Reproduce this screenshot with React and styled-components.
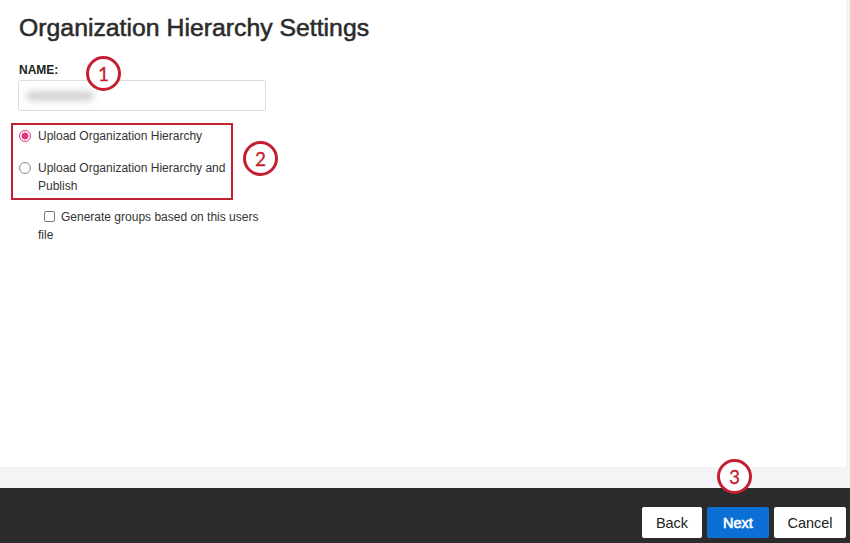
import React from "react";
import styled, { createGlobalStyle } from "styled-components";

const Global = createGlobalStyle`
  html, body { margin: 0; padding: 0; }
  body { font-family: "Liberation Sans", Arial, sans-serif; color: #333; }
  * { box-sizing: border-box; }
`;

const Page = styled.div`
  position: relative;
  width: 850px;
  height: 543px;
  display: flex;
  flex-direction: column;
  background: #f4f4f6;
  overflow: hidden;
`;

const Panel = styled.main`
  height: 467px;
  margin-right: 4px;
  background: #fff;
  padding: 13px 0 0 19px;
  display: flex;
  flex-direction: column;
`;

const Title = styled.h1`
  margin: 0;
  font-size: 24.8px;
  line-height: 29px;
  font-weight: 400;
  color: #2b2b2b;
  -webkit-text-stroke: 0.55px #2b2b2b;
`;

const Label = styled.label`
  margin-top: 21px;
  font-size: 12px;
  line-height: 14px;
  font-weight: 700;
  color: #222;
`;

const Field = styled.div`
  margin-top: 3px;
  margin-left: -1px;
  width: 248px;
  height: 31px;
  border: 1px solid #dcdcdc;
  border-radius: 2px;
  display: flex;
  align-items: center;
  padding-left: 7px;
`;

const Blurred = styled.span`
  display: inline-block;
  width: 68px;
  height: 10px;
  background: #d2d2d2;
  border-radius: 5px;
  filter: blur(3.5px);
`;

const OptionBox = styled.div`
  margin-top: 12px;
  margin-left: -8px;
  width: 222px;
  border: 2px solid #c21f30;
  padding: 2px 0 3px 6px;
  display: flex;
  flex-direction: column;
  gap: 14px;
`;

const Option = styled.label`
  display: flex;
  align-items: flex-start;
  gap: 7px;
  font-size: 12px;
  line-height: 18px;
  color: #333;
`;

const Radio = styled.span`
  flex: none;
  width: 12px;
  height: 12px;
  margin-top: 3px;
  border-radius: 50%;
  border: 1px solid ${(p) => (p.$checked ? "#e6337d" : "#8a8a8a")};
  background: ${(p) =>
    p.$checked ? "radial-gradient(circle, #e6337d 0 3.3px, #fff 3.8px)" : "#fff"};
`;

const OptionText = styled.span`
  width: 192px;
`;

const CheckRow = styled.div`
  margin-top: 8px;
  margin-left: 19px;
  width: 228px;
  font-size: 12px;
  line-height: 18px;
  color: #333;
`;

const Check = styled.span`
  display: inline-block;
  vertical-align: -1px;
  width: 11px;
  height: 11px;
  margin: 0 6px 0 6px;
  border: 1px solid #777;
  border-radius: 2px;
  background: #fff;
`;

const Footer = styled.footer`
  margin-top: 21px;
  flex: 1;
  background: #2b2b2b;
  display: flex;
  justify-content: flex-end;
  align-items: flex-start;
  gap: 5px;
  padding: 19px 4px 0 0;
`;

const Button = styled.button`
  height: 31px;
  width: ${(p) => p.$w}px;
  border: none;
  border-radius: 2px;
  font-family: "Liberation Sans", Arial, sans-serif;
  font-size: 14.5px;
  font-weight: 400;
  color: ${(p) => (p.$primary ? "#fff" : "#222")};
  background: ${(p) => (p.$primary ? "#0b6fd6" : "#fff")};
  -webkit-text-stroke: ${(p) => (p.$primary ? "0.6px #fff" : "0")};
  padding: 0;
`;

const Marker = styled.div`
  position: absolute;
  left: ${(p) => p.$x - 17}px;
  top: ${(p) => p.$y - 17}px;
  width: 35px;
  height: 35px;
  border-radius: 50%;
  border: 3px solid #c41f31;
  background: #fff;
  color: #c41f31;
  display: flex;
  align-items: center;
  justify-content: center;
  font-family: Lato, "Open Sans", sans-serif;
  font-size: 19px;
  line-height: 1;
  -webkit-text-stroke: 0.3px #c41f31;
`;

export default function App() {
  return (
    <>
      <Global />
      <Page>
        <Panel>
          <Title>Organization Hierarchy Settings</Title>
          <Label>NAME:</Label>
          <Field>
            <Blurred />
          </Field>
          <OptionBox>
            <Option>
              <Radio $checked />
              <OptionText>Upload Organization Hierarchy</OptionText>
            </Option>
            <Option>
              <Radio />
              <OptionText>Upload Organization Hierarchy and Publish</OptionText>
            </Option>
          </OptionBox>
          <CheckRow>
            <Check />
            Generate groups based on this users file
          </CheckRow>
        </Panel>
        <Footer>
          <Button $w={60}>Back</Button>
          <Button $w={62} $primary>Next</Button>
          <Button $w={72}>Cancel</Button>
        </Footer>
        <Marker $x={103} $y={73}>1</Marker>
        <Marker $x={260} $y={158}>2</Marker>
        <Marker $x={734} $y={476}>3</Marker>
      </Page>
    </>
  );
}
